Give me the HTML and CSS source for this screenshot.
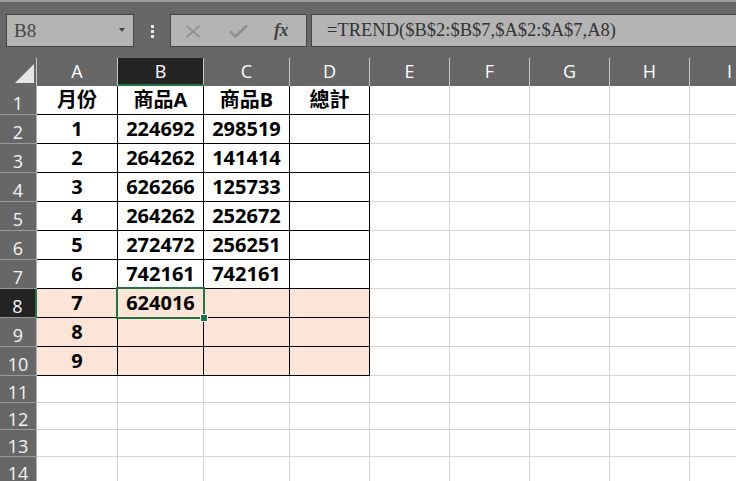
FILE: index.html
```html
<!DOCTYPE html>
<html>
<head>
<meta charset="utf-8">
<link rel="stylesheet" href="styles.css">
</head>
<body>
<div class="strip"></div>
<div class="toolbar">
  <div class="namebox"><span>B8</span><span class="dd"></span></div>
  <div class="grip"><i></i><i></i><i></i></div>
  <div class="fbtns">
    <svg class="ic-x" width="16" height="13" viewBox="0 0 16 13"><path d="M1.5 0.8 L14.5 12.2 M14.5 0.8 L1.5 12.2" stroke="#8e8e8e" stroke-width="1.6" fill="none"/></svg>
    <svg class="ic-ok" width="19" height="14" viewBox="0 0 19 14"><path d="M1 7.5 L6.5 12.5 L18 1.5" stroke="#8e8e8e" stroke-width="2.6" fill="none"/></svg>
    <span class="fx">fx</span>
  </div>
  <div class="formula">=TREND($B$2:$B$7,$A$2:$A$7,A8)</div>
</div>
<div class="sheet">
  <div class="corner"><svg width="19" height="19" viewBox="0 0 19 19"><path d="M19 0 L19 19 L0 19 Z" fill="#e6e6e6"/></svg></div>
  <div class="ch">A</div><div class="ch sel">B</div><div class="ch">C</div><div class="ch">D</div><div class="ch">E</div><div class="ch">F</div><div class="ch">G</div><div class="ch">H</div><div class="ch">I</div>

  <div class="rh">1</div><div class="c t">月份</div><div class="c t">商品A</div><div class="c t">商品B</div><div class="c t">總計</div><div class="c"></div><div class="c"></div><div class="c"></div><div class="c"></div><div class="c"></div>
  <div class="rh">2</div><div class="c t">1</div><div class="c t">224692</div><div class="c t">298519</div><div class="c t"></div><div class="c"></div><div class="c"></div><div class="c"></div><div class="c"></div><div class="c"></div>
  <div class="rh">3</div><div class="c t">2</div><div class="c t">264262</div><div class="c t">141414</div><div class="c t"></div><div class="c"></div><div class="c"></div><div class="c"></div><div class="c"></div><div class="c"></div>
  <div class="rh">4</div><div class="c t">3</div><div class="c t">626266</div><div class="c t">125733</div><div class="c t"></div><div class="c"></div><div class="c"></div><div class="c"></div><div class="c"></div><div class="c"></div>
  <div class="rh">5</div><div class="c t">4</div><div class="c t">264262</div><div class="c t">252672</div><div class="c t"></div><div class="c"></div><div class="c"></div><div class="c"></div><div class="c"></div><div class="c"></div>
  <div class="rh">6</div><div class="c t">5</div><div class="c t">272472</div><div class="c t">256251</div><div class="c t"></div><div class="c"></div><div class="c"></div><div class="c"></div><div class="c"></div><div class="c"></div>
  <div class="rh">7</div><div class="c t">6</div><div class="c t">742161</div><div class="c t">742161</div><div class="c t"></div><div class="c"></div><div class="c"></div><div class="c"></div><div class="c"></div><div class="c"></div>
  <div class="rh sel">8</div><div class="c t p">7</div><div class="c t p active">624016<span class="frame"></span><span class="handle"></span></div><div class="c t p"></div><div class="c t p"></div><div class="c"></div><div class="c"></div><div class="c"></div><div class="c"></div><div class="c"></div>
  <div class="rh">9</div><div class="c t p">8</div><div class="c t p"></div><div class="c t p"></div><div class="c t p"></div><div class="c"></div><div class="c"></div><div class="c"></div><div class="c"></div><div class="c"></div>
  <div class="rh">10</div><div class="c t p">9</div><div class="c t p"></div><div class="c t p"></div><div class="c t p"></div><div class="c"></div><div class="c"></div><div class="c"></div><div class="c"></div><div class="c"></div>
  <div class="rh">11</div><div class="c"></div><div class="c"></div><div class="c"></div><div class="c"></div><div class="c"></div><div class="c"></div><div class="c"></div><div class="c"></div><div class="c"></div>
  <div class="rh">12</div><div class="c"></div><div class="c"></div><div class="c"></div><div class="c"></div><div class="c"></div><div class="c"></div><div class="c"></div><div class="c"></div><div class="c"></div>
  <div class="rh">13</div><div class="c"></div><div class="c"></div><div class="c"></div><div class="c"></div><div class="c"></div><div class="c"></div><div class="c"></div><div class="c"></div><div class="c"></div>
  <div class="rh">14</div><div class="c"></div><div class="c"></div><div class="c"></div><div class="c"></div><div class="c"></div><div class="c"></div><div class="c"></div><div class="c"></div><div class="c"></div>
</div>
</body>
</html>
```

FILE: styles.css
```css
* { box-sizing: border-box; }
html, body { margin: 0; padding: 0; }
body {
  width: 736px;
  height: 481px;
  overflow: hidden;
  background: #676767;
  font-family: "Noto Sans", "Noto Sans CJK TC", sans-serif;
}
.strip { height: 2px; background: #9c9c9c; }
.toolbar {
  display: flex;
  align-items: flex-start;
  height: 56px;
  padding: 12px 0 0 6px;
  overflow: hidden;
}
.namebox {
  flex: 0 0 128px;
  height: 33px;
  border: 1px solid #444;
  background: #b4b4b4;
  display: flex;
  align-items: center;
  justify-content: space-between;
  padding: 0 8px 0 7px;
  font: 19px "Liberation Serif", serif;
  color: #444;
}
.dd {
  width: 0; height: 0;
  border-left: 3.5px solid transparent;
  border-right: 3.5px solid transparent;
  border-top: 4px solid #444;
  margin-top: -2px;
}
.grip {
  flex: 0 0 36px;
  display: flex;
  flex-direction: column;
  align-items: center;
  gap: 2px;
  padding-top: 11px;
}
.grip i { display: block; width: 3px; height: 3px; background: #ececec; }
.fbtns {
  flex: 0 0 137px;
  height: 33px;
  border: 1px solid #444;
  background: #b4b4b4;
  display: flex;
  align-items: center;
  padding-left: 14px;
}
.ic-x { margin-top: 1px; }
.ic-ok { margin-left: 28px; margin-top: 0; }
.fx {
  margin-left: 26px;
  font: italic bold 18px "Liberation Serif", serif;
  color: #444;
  letter-spacing: -0.5px;
}
.formula {
  flex: 0 0 440px;
  margin-left: 4px;
  height: 33px;
  border: 1px solid #444;
  background: #b4b4b4;
  display: flex;
  align-items: center;
  padding-left: 15px;
  font: 18.5px "Liberation Serif", serif;
  color: #333;
  white-space: nowrap;
}
.sheet {
  display: grid;
  grid-template-columns: 37px 81px 86px 86px repeat(6, 80px);
  grid-template-rows: 28px repeat(10, 29px) repeat(4, 27px);
}
.corner {
  border-right: 1px solid #c8c8c8;
  display: flex;
  justify-content: flex-end;
  align-items: flex-end;
  padding: 0 2px 3px 0;
}
.corner svg { display: block; }
.ch {
  background: #676767;
  color: #fff;
  border-right: 1px solid #c8c8c8;
  display: flex;
  align-items: center;
  justify-content: center;
  font: 18px "Open Sans", sans-serif;
  padding-bottom: 3px;
}
.ch.sel { background: #232323; border-bottom: 2px solid #217346; padding-bottom: 1px; }
.rh {
  background: #676767;
  color: #f4f4f4;
  border-right: 1px solid #b0b0b0;
  border-bottom: 1px solid #9a9a9a;
  display: flex;
  align-items: center;
  justify-content: center;
  font: 18px "Open Sans", sans-serif;
  padding-top: 5px;
}
.rh.sel { background: #232323; border-right: 2px solid #217346; padding-right: 0; }
.c {
  background: #fff;
  border-right: 1px solid #d4d4d4;
  border-bottom: 1px solid #d4d4d4;
  display: flex;
  align-items: center;
  justify-content: center;
  font-weight: 700;
  font-size: 20px;
  line-height: 1;
  color: #000;
}
.c.t { border-right-color: #000; border-bottom-color: #000; }
.c.p { background: #fce4d6; }
.active { position: relative; }
.frame {
  position: absolute;
  left: -2px; top: -2px; right: -2px; bottom: -2px;
  border: 2px solid #217346;
}
.handle {
  position: absolute;
  right: -4px; bottom: -4px;
  width: 6px; height: 6px;
  background: #217346;
  box-shadow: 0 0 0 1px #fff;
  z-index: 2;
}
```
